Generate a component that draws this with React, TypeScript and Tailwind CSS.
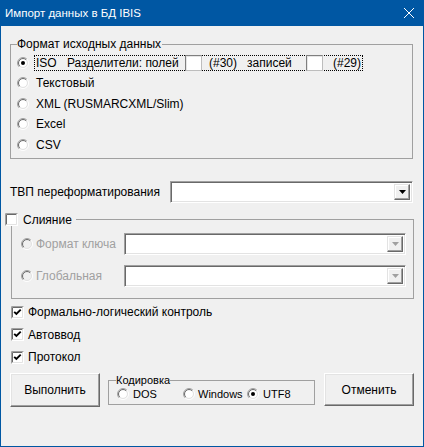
import React from "react";

function Radio({ checked = false, disabled = false }: { checked?: boolean; disabled?: boolean }) {
    const k = 0.7071;
    const arc = (r: number, topLeft: boolean) => {
        const x1 = 6 - r * k, y1 = 6 + r * k, x2 = 6 + r * k, y2 = 6 - r * k;
        return topLeft
            ? `M${x1} ${y1}A${r} ${r} 0 0 1 ${x2} ${y2}`
            : `M${x2} ${y2}A${r} ${r} 0 0 1 ${x1} ${y1}`;
    };
    return (
        <svg width="12" height="12" viewBox="0 0 12 12" className="shrink-0">
            <circle cx="6" cy="6" r="4" fill={disabled ? "#f0f0f0" : "#fff"} />
            <path d={arc(5.5, true)} stroke="#a0a0a0" fill="none" />
            <path d={arc(5.5, false)} stroke="#fff" fill="none" />
            <path d={arc(4.5, true)} stroke="#696969" fill="none" />
            <path d={arc(4.5, false)} stroke="#e3e3e3" fill="none" />
            {checked && <circle cx="6" cy="6" r="2" fill="#000" />}
        </svg>
    );
}

function Check({ checked = false }: { checked?: boolean }) {
    return (
        <svg width="13" height="13" viewBox="0 0 13 13" className="shrink-0">
            <rect x="0" y="0" width="13" height="13" fill="#fff" />
            <path d="M0.5 12.5V0.5H12.5" stroke="#a0a0a0" fill="none" />
            <path d="M1.5 11.5V1.5H11.5" stroke="#696969" fill="none" />
            <path d="M1.5 11.5H11.5V1.5" stroke="#e3e3e3" fill="none" />
            {checked && <path d="M3.2 5.8l2.2 2.2l4.3-4.3" stroke="#000" strokeWidth="1.9" fill="none" />}
        </svg>
    );
}

function Combo({ disabled = false, className = "" }: { disabled?: boolean; className?: string }) {
    return (
        <div className={`flex justify-end bg-white border border-t-[#a0a0a0] border-l-[#a0a0a0] border-b-white border-r-white shadow-[inset_1px_1px_0_#696969,inset_-1px_-1px_0_#e3e3e3] p-[2px] ${className}`}>
            <div className="w-[16px] flex items-center justify-center bg-[#f0f0f0] border border-t-[#e3e3e3] border-l-[#e3e3e3] border-b-[#696969] border-r-[#696969] shadow-[inset_-1px_-1px_0_#a0a0a0,inset_1px_1px_0_#fff]">
                <svg width="7" height="4" viewBox="0 0 7 4">
                    <path d="M0 0h7L3.5 4z" fill={disabled ? "#a0a0a0" : "#000"} />
                </svg>
            </div>
        </div>
    );
}

function SmallBox({ className = "" }: { className?: string }) {
    return (
        <div className={`shrink-0 w-[17px] h-[16px] bg-white border border-t-[#7f7f7f] border-l-[#7f7f7f] border-b-[#bdbdbd] border-r-[#bdbdbd] shadow-[inset_1px_1px_0_#e6e6e6] ${className}`} />
    );
}

function WinButton({ label, className = "" }: { label: string; className?: string }) {
    return (
        <button className={`w-[90px] flex items-center justify-center bg-[#f0f0f0] border border-t-white border-l-white border-b-[#696969] border-r-[#696969] shadow-[inset_-1px_-1px_0_#a0a0a0,inset_1px_1px_0_#e3e3e3] ${className}`}>
            {label}
        </button>
    );
}

const formats = [
    { label: "Текстовый", h: "h-[20px]" },
    { label: "XML (RUSMARCXML/Slim)", h: "h-[21px]" },
    { label: "Excel", h: "h-[20px]" },
    { label: "CSV", h: "h-[21px]" },
];

export default function App() {
    return (
        <div className="w-[424px] h-[447px] flex flex-col bg-[#f0f0f0] border-x border-b border-[#0057a3] text-[12px] leading-[14px] text-black font-['Liberation_Sans',Arial,sans-serif] select-none">
            {/* заголовок окна */}
            <div className="h-[26px] -mx-px flex items-center justify-between bg-[#0057a3] pl-[5px] pr-[10px] text-white text-[11.5px]">
                <span>Импорт данных в БД IBIS</span>
                <svg width="10" height="10" viewBox="0 0 10 10">
                    <path d="M0 0L10 10M10 0L0 10" stroke="#fff" strokeWidth="1" />
                </svg>
            </div>

            <div className="flex flex-col pl-[9px] pr-[10px]">
                {/* Формат исходных данных */}
                <div className="mt-[18px] flex flex-col border border-[#a0a0a0] pb-[3px]">
                    <div className="-mt-[8px] ml-[6px] w-fit h-[14px] bg-[#f0f0f0] pr-[1px]">Формат исходных данных</div>
                    <div className="mt-[1px] h-[21px] flex items-center pl-[6px]">
                        <Radio checked />
                        <div className="ml-[5px] h-[16px] flex items-center border border-dotted border-black pl-[1px] whitespace-nowrap">
                            <span className="w-[31px]">ISO</span>
                            <span className="w-[118px]">Разделители: полей</span>
                            <SmallBox />
                            <span className="ml-[7px] w-[38px]">(#30)</span>
                            <span className="w-[59px]">записей</span>
                            <SmallBox />
                            <span className="ml-[10px] w-[29px]">(#29)</span>
                        </div>
                    </div>
                    {formats.map((f) => (
                        <div key={f.label} className={`${f.h} flex items-center pl-[6px]`}>
                            <Radio />
                            <span className="ml-[7px]">{f.label}</span>
                        </div>
                    ))}
                </div>

                {/* ТВП */}
                <div className="mt-[22px] h-[22px] flex items-center">
                    <span>ТВП переформатирования</span>
                    <Combo className="ml-auto w-[243px] h-[22px]" />
                </div>

                {/* Слияние */}
                <div className="mt-[16px] ml-[1px] -mr-[1px] flex flex-col border border-[#a0a0a0] pb-[11px]">
                    <div className="-mt-[7px] -ml-[7px] w-fit h-[13px] flex items-center bg-[#f0f0f0] pr-[4px]">
                        <Check />
                        <span className="ml-[5px]">Слияние</span>
                    </div>
                    <div className="mt-[7px] flex flex-col gap-[10px] pl-[9px] pr-[7px]">
                        {["Формат ключа", "Глобальная"].map((t) => (
                            <div key={t} className="h-[22px] flex items-center">
                                <Radio disabled />
                                <span className="ml-[3px] text-[#a0a0a0]">{t}</span>
                                <Combo disabled className="ml-auto w-[282px] h-[22px]" />
                            </div>
                        ))}
                    </div>
                </div>

                {/* флажки */}
                <div className="mt-[2px] flex flex-col pl-[1px]">
                    <div className="h-[22px] flex items-center">
                        <Check checked />
                        <span className="ml-[4px]">Формально-логический контроль</span>
                    </div>
                    <div className="h-[23px] flex items-center">
                        <Check checked />
                        <span className="ml-[4px]">Автоввод</span>
                    </div>
                    <div className="h-[22px] flex items-center">
                        <Check checked />
                        <span className="ml-[4px]">Протокол</span>
                    </div>
                </div>

                {/* кнопки */}
                <div className="mt-[5px] flex items-start">
                    <WinButton label="Выполнить" className="h-[34px]" />
                    <div className="ml-[8px] mt-[7px] w-[207px] h-[25px] flex flex-col border border-[#a0a0a0] text-[11px]">
                        <div className="-mt-[8px] ml-[7px] w-fit h-[14px] bg-[#f0f0f0]">Кодировка</div>
                        <div className="mt-[1px] flex items-center pl-[8px] h-[12px]">
                            <div className="w-[66px] flex items-center">
                                <Radio />
                                <span className="ml-[4px]">DOS</span>
                            </div>
                            <div className="w-[64px] flex items-center">
                                <Radio />
                                <span className="ml-[3px]">Windows</span>
                            </div>
                            <div className="flex items-center">
                                <Radio checked />
                                <span className="ml-[4px]">UTF8</span>
                            </div>
                        </div>
                    </div>
                    <WinButton label="Отменить" className="ml-auto -mr-[1px] h-[33px]" />
                </div>
            </div>
        </div>
    );
}
